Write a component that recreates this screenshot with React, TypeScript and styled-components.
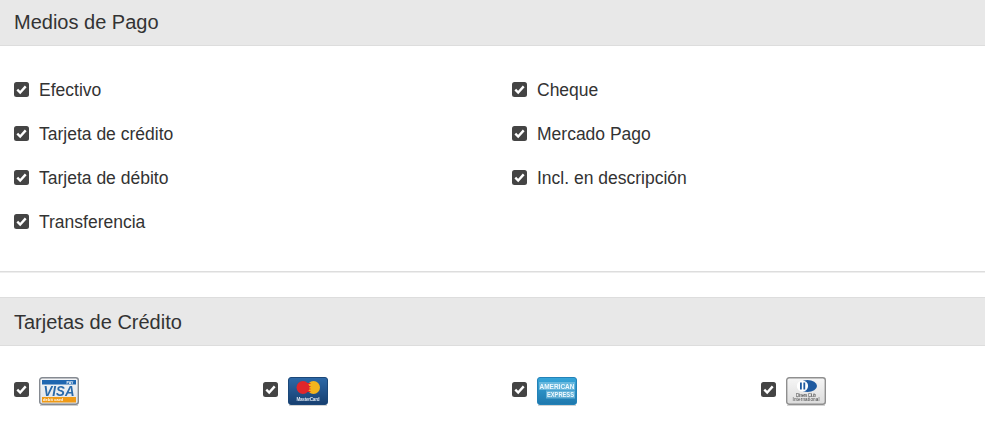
import React from "react";
import styled, { createGlobalStyle } from "styled-components";

const Global = createGlobalStyle`
  html, body { margin: 0; padding: 0; background: #fff; overflow: hidden; }
  body { font-family: "Liberation Sans", Arial, sans-serif; color: #333; }
`;

const Page = styled.div`
  width: 985px;
  height: 447px;
  overflow: hidden;
`;

const SectionHeader = styled.h2<{ $top?: boolean }>`
  margin: 0;
  box-sizing: border-box;
  height: ${(p) => (p.$top ? "49px" : "46px")};
  padding: ${(p) => (p.$top ? "2px 14px 0" : "0 14px")};
  display: flex;
  align-items: center;
  font-size: 20px;
  font-weight: 400;
  color: #333;
  background: #e8e8e8;
  border-bottom: 1px solid #ddd;
  border-top: ${(p) => (p.$top ? "1px solid #ddd" : "none")};
`;

const PaymentGrid = styled.div`
  display: grid;
  grid-template-columns: 498px 498px;
  grid-template-rows: repeat(4, 44px);
  grid-auto-flow: column;
  padding: 21px 0 28px 14px;
`;

const Option = styled.label`
  display: flex;
  align-items: center;
  gap: 10px;
  font-size: 17.5px;
  line-height: 22px;
  color: #333;
`;

const OptionText = styled.span`
  padding-top: 2px;
`;

const Box = styled.span`
  width: 15px;
  height: 15px;
  flex: none;
  display: flex;
  align-items: center;
  justify-content: center;
  background: #444;
  border-radius: 2.5px;
`;

const CardOption = styled(Option)`
  align-items: flex-start;

  ${Box} {
    margin-top: 5px;
  }
`;

const Divider = styled.hr`
  margin: 0 0 24px;
  height: 0;
  border: 0;
  border-top: 1px solid #ddd;
  border-bottom: 1px solid #eee;
`;

const CardGrid = styled.div`
  display: grid;
  grid-template-columns: repeat(4, 249px);
  padding: 31px 0 0 14px;
`;

const CardIcon = styled.svg`
  display: block;
  width: 40px;
  height: 29px;
  flex: none;
  filter: blur(0.45px);
`;

const Check = () => (
  <Box>
    <svg width="11" height="11" viewBox="0 0 11 11" aria-hidden="true">
      <path d="M1.3 5.6 4.2 8.5 9.7 2.4" fill="none" stroke="#fff" strokeWidth="2.4" />
    </svg>
  </Box>
);

const Visa = () => (
  <CardIcon viewBox="0 0 40 29">
    <defs>
      <linearGradient id="visaBg" x1="0" y1="0" x2="0" y2="1">
        <stop offset="0" stopColor="#f4f5f7" />
        <stop offset="1" stopColor="#dfe3e8" />
      </linearGradient>
    </defs>
    <rect x="0.7" y="0.7" width="38.6" height="26.6" rx="2.5" fill="url(#visaBg)" stroke="#858a91" strokeWidth="1.4" />
    <rect x="3" y="3" width="34" height="4.5" fill="#1f66b0" />
    <text x="31" y="6.6" textAnchor="middle" fontFamily="Liberation Sans" fontSize="3.6" fontWeight="700" fill="#fff">PAY</text>
    <text x="20" y="19" textAnchor="middle" fontFamily="Liberation Sans" fontSize="14" fontWeight="700" fontStyle="italic" fill="#2a6aaa" textLength="31" lengthAdjust="spacingAndGlyphs">VISA</text>
    <rect x="3" y="20" width="34" height="5.5" fill="#ef9a17" />
    <text x="4" y="24.3" fontFamily="Liberation Sans" fontSize="4" fontWeight="700" fill="#fff" textLength="20">debit card</text>
    <rect x="1" y="28" width="38" height="1" fill="#cfcfcf" />
  </CardIcon>
);

const Master = () => (
  <CardIcon viewBox="0 0 40 29">
    <defs>
      <linearGradient id="mcBg" x1="0" y1="0" x2="0" y2="1">
        <stop offset="0" stopColor="#2d69a8" />
        <stop offset="1" stopColor="#173f70" />
      </linearGradient>
    </defs>
    <rect x="0.5" y="0.5" width="39" height="27" rx="2.5" fill="url(#mcBg)" stroke="#1b4778" />
    <circle cx="25.5" cy="10.5" r="6.5" fill="#f3b41d" />
    <circle cx="15" cy="10.5" r="6.5" fill="#e0262b" />
    <path d="M19 6.5h3.5M18.5 9.5h4M18.5 12h4M19.5 14.5h3" stroke="#e0262b" strokeWidth="1.1" />
    <text x="20" y="23.5" textAnchor="middle" fontFamily="Liberation Sans" fontSize="4.6" fontWeight="700" fill="#dce6f1" textLength="23">MasterCard</text>
    <rect x="1" y="28" width="38" height="1" fill="#d4d4d4" />
  </CardIcon>
);

const Amex = () => (
  <CardIcon viewBox="0 0 40 29">
    <defs>
      <linearGradient id="amexBg" x1="0" y1="0" x2="0" y2="1">
        <stop offset="0" stopColor="#36a6da" />
        <stop offset="1" stopColor="#1f78ad" />
      </linearGradient>
    </defs>
    <rect x="0.5" y="0.5" width="39" height="27" rx="2.5" fill="url(#amexBg)" stroke="#2382b8" />
    <rect x="2" y="5" width="36" height="8" fill="#8ccbe8" opacity="0.6" />
    <rect x="9" y="13.5" width="29" height="8" fill="#8ccbe8" opacity="0.6" />
    <text x="20" y="11.5" textAnchor="middle" fontFamily="Liberation Sans" fontSize="6.6" fontWeight="700" fill="#eef8fd" textLength="35" lengthAdjust="spacingAndGlyphs">AMERICAN</text>
    <text x="23.5" y="20" textAnchor="middle" fontFamily="Liberation Sans" fontSize="6.6" fontWeight="700" fill="#eef8fd" textLength="27" lengthAdjust="spacingAndGlyphs">EXPRESS</text>
    <rect x="1" y="28" width="38" height="1" fill="#d4d4d4" />
  </CardIcon>
);

const Diners = () => (
  <CardIcon viewBox="0 0 40 29">
    <defs>
      <linearGradient id="dcBg" x1="0" y1="0" x2="0" y2="1">
        <stop offset="0" stopColor="#f6f6f6" />
        <stop offset="1" stopColor="#dcdcdc" />
      </linearGradient>
    </defs>
    <rect x="0.7" y="0.7" width="38.6" height="26.6" rx="2.5" fill="url(#dcBg)" stroke="#8f8f8f" strokeWidth="1.4" />
    <ellipse cx="21.5" cy="9" rx="9.5" ry="6" fill="#1f5aa0" />
    <circle cx="16.5" cy="9" r="5.6" fill="#fff" />
    <rect x="14" y="5.5" width="1.8" height="7" fill="#1f5aa0" />
    <rect x="17.4" y="5.5" width="1.8" height="7" fill="#1f5aa0" />
    <text x="20" y="19.5" textAnchor="middle" fontFamily="Liberation Sans" fontSize="4.6" fill="#444" textLength="20">Diners Club</text>
    <text x="20" y="24.3" textAnchor="middle" fontFamily="Liberation Sans" fontSize="4.6" fill="#444" textLength="27">International</text>
    <rect x="1" y="28" width="38" height="1" fill="#d4d4d4" />
  </CardIcon>
);

const methods = [
  "Efectivo",
  "Tarjeta de crédito",
  "Tarjeta de débito",
  "Transferencia",
  "Cheque",
  "Mercado Pago",
  "Incl. en descripción",
];

const cards = [Visa, Master, Amex, Diners];

export default function App() {
  return (
    <Page>
      <Global />
      <SectionHeader>Medios de Pago</SectionHeader>
      <PaymentGrid>
        {methods.map((m) => (
          <Option key={m}>
            <Check />
            <OptionText>{m}</OptionText>
          </Option>
        ))}
      </PaymentGrid>
      <Divider />
      <SectionHeader $top>Tarjetas de Crédito</SectionHeader>
      <CardGrid>
        {cards.map((C, i) => (
          <CardOption key={i}>
            <Check />
            <C />
          </CardOption>
        ))}
      </CardGrid>
    </Page>
  );
}
